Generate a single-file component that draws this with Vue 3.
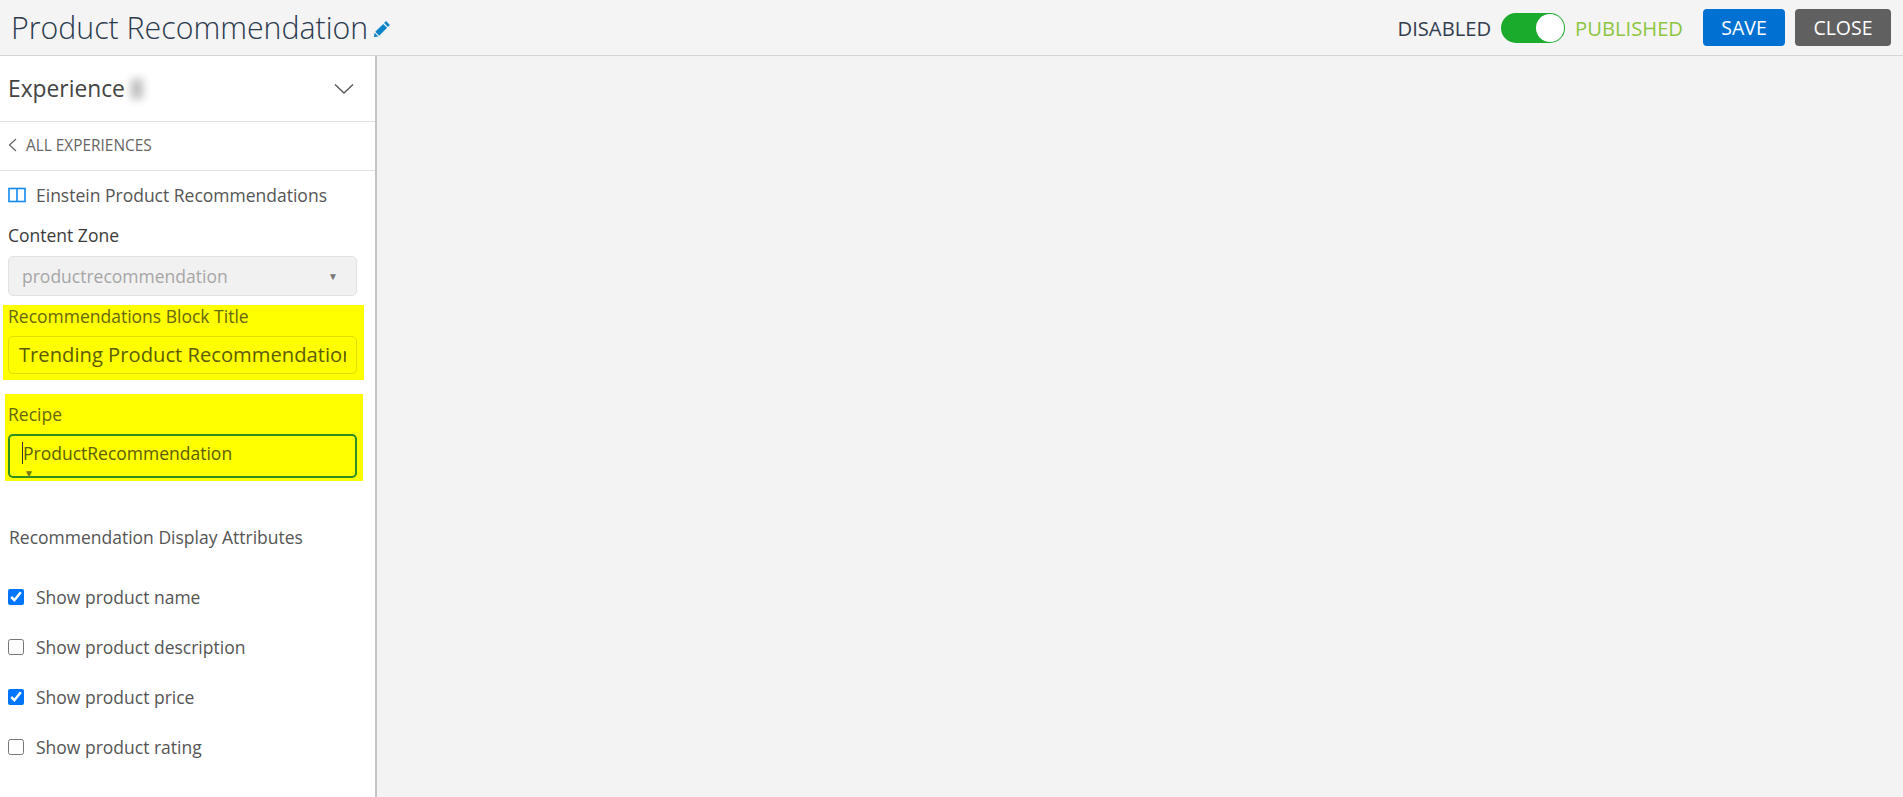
<template>
  <div class="page">
    <header class="topbar">
      <div class="title-wrap">
        <h1 class="title">Product Recommendation</h1>
        <svg class="pencil" viewBox="0 0 16 16" width="16" height="16">
          <path d="M12.6 0.6 L15.4 3.4 Q15.9 4 15.4 4.5 L14 5.9 L10.1 2 L11.5 0.6 Q12 0.1 12.6 0.6 Z" fill="#0a84c9" />
          <path d="M9.2 2.9 L13.1 6.8 L5.2 14.7 L1.3 10.8 Z" fill="#0a84c9" />
          <path d="M0.6 11.7 L4.3 15.4 L0.4 16 Q0 16 0 15.5 Z" fill="#0a84c9" />
        </svg>
      </div>
      <div class="actions">
        <span class="state-off">DISABLED</span>
        <span class="toggle"><span class="knob"></span></span>
        <span class="state-on">PUBLISHED</span>
        <button class="btn btn-save">SAVE</button>
        <button class="btn btn-close">CLOSE</button>
      </div>
    </header>

    <div class="body">
      <aside class="sidebar">
        <div class="exp-head">
          <div class="exp-title">Experience<span class="smudge"></span></div>
          <svg class="chevron" viewBox="0 0 20 12" width="20" height="12">
            <path d="M1 1.5 L10 10 L19 1.5" fill="none" stroke="#555" stroke-width="1.3" />
          </svg>
        </div>

        <div class="back-row">
          <svg viewBox="0 0 9 14" width="9" height="14">
            <path d="M8 1 L1.5 7 L8 13" fill="none" stroke="#666" stroke-width="1.2" />
          </svg>
          <span>ALL EXPERIENCES</span>
        </div>

        <div class="type-row">
          <svg viewBox="0 0 18 16" width="18" height="16">
            <rect x="1" y="1.5" width="16" height="13" fill="none" stroke="#1589ee" stroke-width="1.6" />
            <path d="M9 1.5 V14.5" stroke="#1589ee" stroke-width="1.6" />
          </svg>
          <span>Einstein Product Recommendations</span>
        </div>

        <div class="field zone">
          <label class="label">Content Zone</label>
          <div class="select">
            <span>productrecommendation</span>
            <span class="caret">▼</span>
          </div>
        </div>

        <div class="mark mark-title">
          <label class="label">Recommendations Block Title</label>
          <div class="text-input"><div class="text-clip">Trending Product Recommendation</div></div>
        </div>

        <div class="mark mark-recipe">
          <label class="label">Recipe</label>
          <div class="recipe-input">
            <span class="cursor"></span><span>ProductRecommendation</span>
            <span class="recipe-caret">▼</span>
          </div>
        </div>

        <div class="attrs-title">Recommendation Display Attributes</div>
        <ul class="attrs">
          <li v-for="item in attrs" :key="item.label">
            <input type="checkbox" :checked="item.on" />
            <span>{{ item.label }}</span>
          </li>
        </ul>
      </aside>
      <main class="canvas"></main>
    </div>
  </div>
</template>

<script setup>
const attrs = [
  { label: "Show product name", on: true },
  { label: "Show product description", on: false },
  { label: "Show product price", on: true },
  { label: "Show product rating", on: false },
];
</script>

<style>
html,
body {
  margin: 0;
  height: 100%;
  overflow: hidden;
}
</style>

<style scoped>
.page {
  height: 797px;
  display: flex;
  flex-direction: column;
  font-family: "Open Sans", Lato, sans-serif;
  color: #444;
  background: #f3f3f3;
}

.topbar {
  height: 55px;
  flex: none;
  display: flex;
  align-items: center;
  justify-content: space-between;
  padding: 0 12px 0 11px;
  background: #f4f4f4;
  border-bottom: 1px solid #d4d4d4;
}

.title-wrap {
  display: flex;
  align-items: center;
  gap: 6px;
}

.title {
  margin: 0;
  font-size: 30.3px;
  font-weight: 300;
  color: #2b3a4e;
}

.pencil {
  margin-top: 3px;
}

.actions {
  display: flex;
  align-items: center;
  font-size: 20.2px;
}

.state-off {
  color: #333d4f;
}

.toggle {
  width: 64px;
  height: 30px;
  margin: 0 10px;
  box-sizing: border-box;
  display: flex;
  justify-content: flex-end;
  align-items: center;
  padding-right: 1px;
  background: #1aab2d;
  border-radius: 15px;
}

.knob {
  width: 28px;
  height: 28px;
  border-radius: 50%;
  background: #fff;
}

.state-on {
  color: #8cc63f;
  margin-right: 20px;
}

.btn {
  height: 37px;
  border: none;
  border-radius: 4px;
  color: #fff;
  font-family: inherit;
  font-size: 19.5px;
  padding: 0;
}

.btn-save {
  width: 82px;
  background: #0070d2;
  margin-right: 10px;
}

.btn-close {
  width: 96px;
  background: #606060;
}

.body {
  flex: 1;
  display: flex;
  min-height: 0;
}

.sidebar {
  width: 375px;
  flex: none;
  background: #fff;
  border-right: 2px solid #c4c4c4;
}

.canvas {
  flex: 1;
  background: #f3f3f3;
}

.exp-head {
  height: 65px;
  display: flex;
  align-items: center;
  justify-content: space-between;
  padding: 0 21px 0 8px;
  border-bottom: 1px solid #e2e2e2;
}

.exp-title {
  display: flex;
  align-items: center;
  font-size: 22.8px;
  color: #444;
}

.smudge {
  width: 12px;
  height: 20px;
  margin-left: 6px;
  background: #bdbdbd;
  filter: blur(4px);
}

.back-row {
  height: 49px;
  display: flex;
  align-items: center;
  gap: 9px;
  padding: 0 0 2px 8px;
  box-sizing: border-box;
  font-size: 15.4px;
  color: #666;
  border-bottom: 1px solid #e2e2e2;
}

.type-row {
  display: flex;
  align-items: center;
  gap: 10px;
  padding: 10px 8px 0;
  height: 27px;
  font-size: 17.5px;
  color: #555;
}

.field {
  padding: 0 8px;
}

.zone {
  margin-top: 16px;
}

.label {
  display: block;
  font-size: 17.5px;
  line-height: 22px;
}

.zone .label {
  color: #3b3b3b;
}

.select {
  width: 349px;
  height: 40px;
  margin-top: 10px;
  box-sizing: border-box;
  display: flex;
  align-items: center;
  justify-content: space-between;
  padding: 0 18px 0 13px;
  background: #f1f1f1;
  border: 1px solid #e2e2e2;
  border-radius: 5px;
  font-size: 17.5px;
  color: #a6a6a6;
}

.caret {
  font-size: 10px;
  color: #777;
}

.mark {
  background: #ffff00;
  color: #66660a;
}

.mark-title {
  width: 361px;
  height: 75px;
  box-sizing: border-box;
  margin: 9px 0 0 3px;
  padding: 0 5px;
}

.text-input {
  width: 349px;
  height: 38px;
  margin-top: 9px;
  box-sizing: border-box;
  padding: 0 10px 0 10px;
  border: 1px solid #dede00;
  border-radius: 5px;
  font-size: 20.2px;
  line-height: 35px;
  color: #5c5c00;
}

.text-clip {
  white-space: nowrap;
  overflow: hidden;
}

.mark-recipe {
  width: 358px;
  height: 87px;
  box-sizing: border-box;
  margin: 14px 0 0 5px;
  padding: 9px 3px 0;
}

.recipe-input {
  position: relative;
  width: 349px;
  height: 44px;
  margin-top: 9px;
  box-sizing: border-box;
  display: flex;
  align-items: flex-start;
  padding: 5px 0 0 12px;
  border: 2px solid #2e8f1f;
  border-radius: 5px;
  font-size: 17.5px;
  line-height: 24px;
  color: #5c5c00;
}

.cursor {
  width: 1px;
  height: 22px;
  margin-top: 1px;
  background: #333;
}

.recipe-caret {
  position: absolute;
  left: 14px;
  bottom: -1px;
  font-size: 10px;
  line-height: 8px;
  color: #77771a;
}

.attrs-title {
  margin: 44px 0 0 9px;
  font-size: 17.5px;
  line-height: 24px;
  color: #555;
}

.attrs {
  list-style: none;
  margin: 23px 0 0;
  padding: 0 0 0 8px;
}

.attrs li {
  height: 50px;
  display: flex;
  align-items: center;
  gap: 12px;
  font-size: 17.5px;
  color: #555;
}

.attrs input {
  width: 16px;
  height: 16px;
  margin: 0;
}
</style>
